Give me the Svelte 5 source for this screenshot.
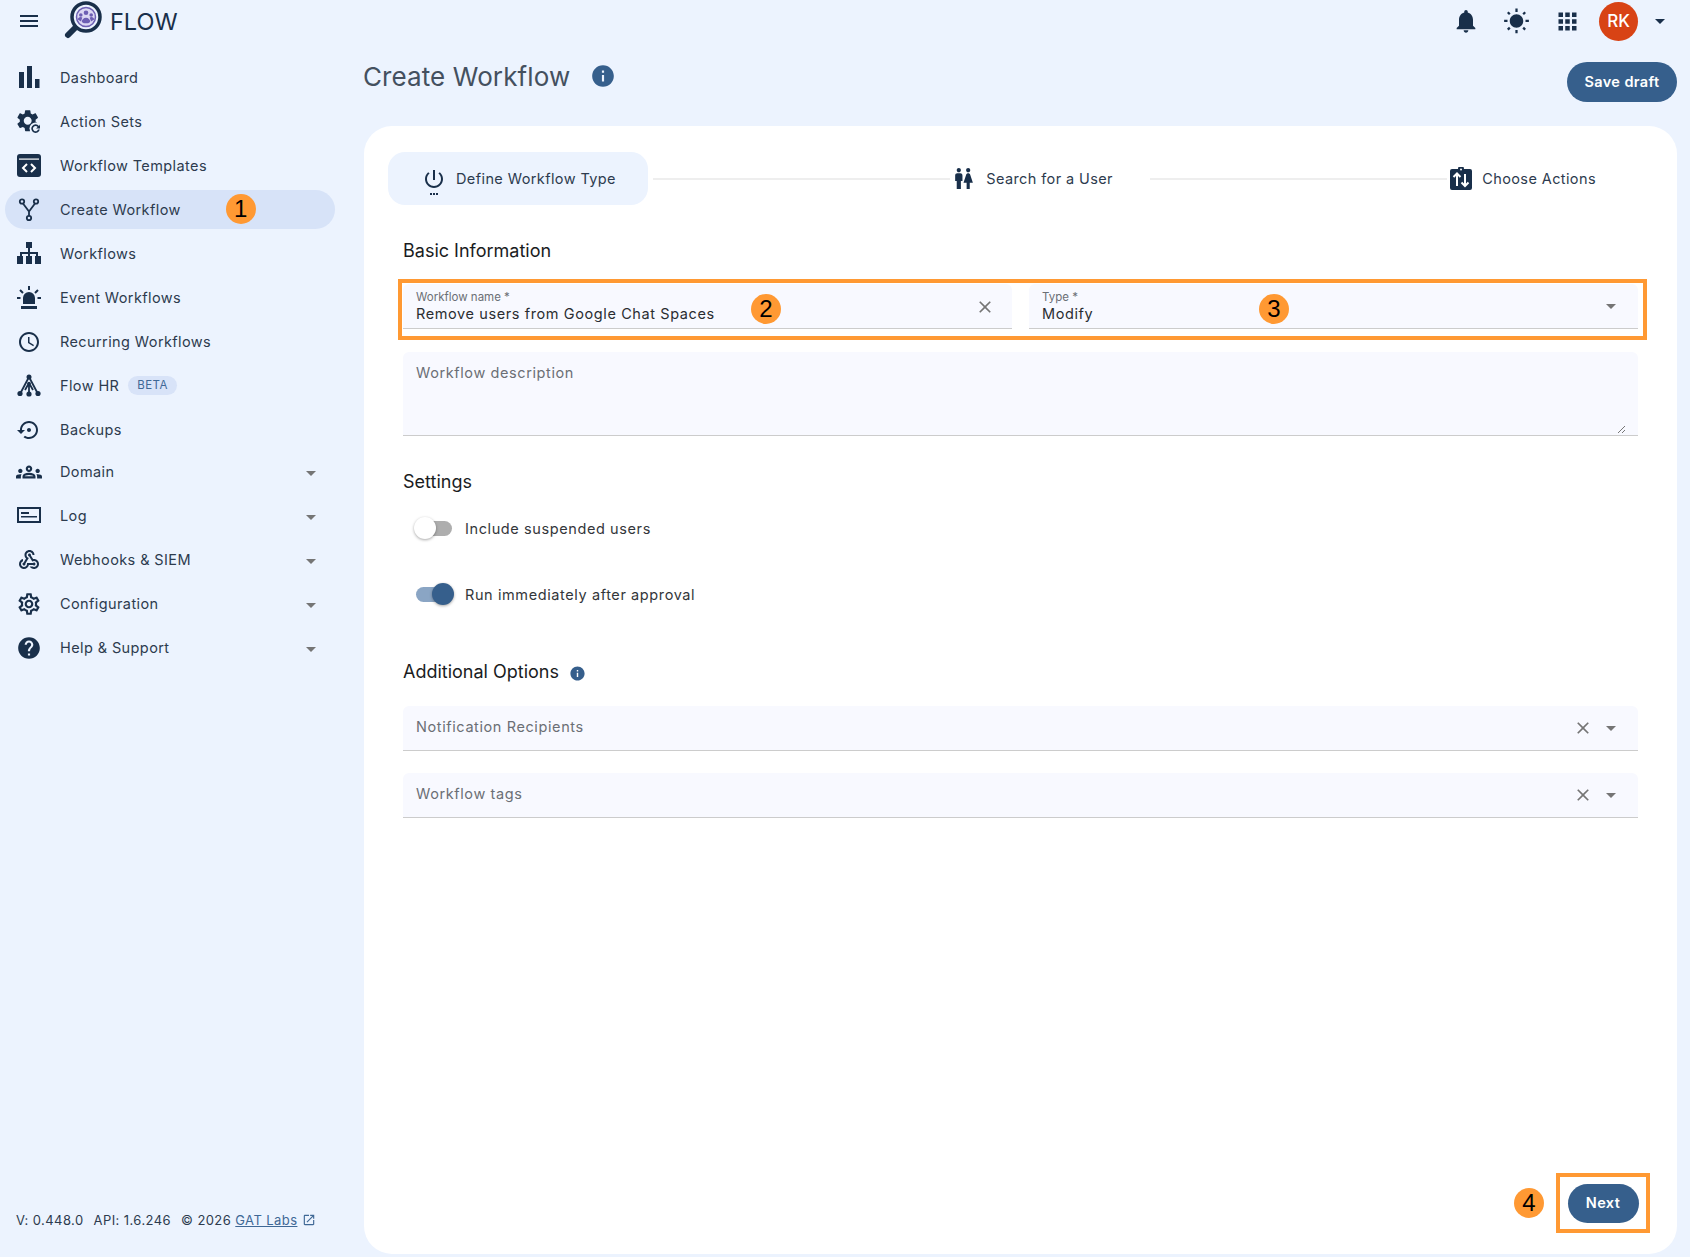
<script>
  const ICONS = {
    settings: "M19.43 12.98c.04-.32.07-.64.07-.98 0-.34-.03-.66-.07-.98l2.11-1.65c.19-.15.24-.42.12-.64l-2-3.46c-.09-.16-.26-.25-.44-.25-.06 0-.12.01-.17.03l-2.49 1c-.52-.4-1.08-.73-1.69-.98l-.38-2.65C14.46 2.18 14.25 2 14 2h-4c-.25 0-.46.18-.49.42l-.38 2.65c-.61.25-1.17.59-1.69.98l-2.49-1c-.06-.02-.12-.03-.18-.03-.17 0-.34.09-.43.25l-2 3.46c-.13.22-.07.49.12.64l2.11 1.65c-.04.32-.07.65-.07.98 0 .33.03.66.07.98l-2.11 1.65c-.19.15-.24.42-.12.64l2 3.46c.09.16.26.25.44.25.06 0 .12-.01.17-.03l2.49-1c.52.4 1.08.73 1.69.98l.38 2.65c.03.24.24.42.49.42h4c.25 0 .46-.18.49-.42l.38-2.65c.61-.25 1.17-.59 1.69-.98l2.49 1c.06.02.12.03.18.03.17 0 .34-.09.43-.25l2-3.46c.12-.22.07-.49-.12-.64l-2.11-1.65zm-1.98-1.71c.04.31.05.52.05.73 0 .21-.02.43-.05.73l-.14 1.13.89.7 1.08.84-.7 1.21-1.27-.51-1.04-.42-.9.68c-.43.32-.84.56-1.25.73l-1.06.43-.16 1.13-.2 1.35h-1.4l-.19-1.35-.16-1.13-1.06-.43c-.43-.18-.83-.41-1.23-.71l-.91-.7-1.06.43-1.27.51-.7-1.21 1.08-.84.89-.7-.14-1.13c-.03-.31-.05-.54-.05-.74s.02-.43.05-.73l.14-1.13-.89-.7-1.08-.84.7-1.21 1.27.51 1.04.42.9-.68c.43-.32.84-.56 1.25-.73l1.06-.43.16-1.13.2-1.35h1.39l.19 1.35.16 1.13 1.06.43c.43.18.83.41 1.23.71l.91.7 1.06-.43 1.27-.51.7 1.21-1.07.85-.89.7.14 1.13zM12 8c-2.21 0-4 1.79-4 4s1.79 4 4 4 4-1.79 4-4-1.79-4-4-4zm0 6c-1.1 0-2-.9-2-2s.9-2 2-2 2 .9 2 2-.9 2-2 2z",
    gearFill: "M19.14 12.94c.04-.3.06-.61.06-.94 0-.32-.02-.64-.07-.94l2.03-1.58c.18-.14.23-.41.12-.61l-1.92-3.32c-.12-.22-.37-.29-.59-.22l-2.39.96c-.5-.38-1.03-.7-1.62-.94l-.36-2.54c-.04-.24-.24-.41-.48-.41h-3.84c-.24 0-.43.17-.47.41l-.36 2.54c-.59.24-1.13.57-1.62.94l-2.39-.96c-.22-.08-.47 0-.59.22L2.74 8.87c-.12.21-.08.47.12.61l2.03 1.58c-.05.3-.09.63-.09.94s.02.64.07.94l-2.03 1.58c-.18.14-.23.41-.12.61l1.92 3.32c.12.22.37.29.59.22l2.39-.96c.5.38 1.03.7 1.62.94l.36 2.54c.05.24.24.41.48.41h3.84c.24 0 .44-.17.47-.41l.36-2.54c.59-.24 1.13-.56 1.62-.94l2.39.96c.22.08.47 0 .59-.22l1.92-3.32c.12-.22.07-.47-.12-.61l-2.01-1.58zM12 15.6c-1.98 0-3.6-1.62-3.6-3.6s1.62-3.6 3.6-3.6 3.6 1.62 3.6 3.6-1.62 3.6-3.6 3.6z",
    clock: "M11.99 2C6.47 2 2 6.48 2 12s4.47 10 9.99 10C17.52 22 22 17.52 22 12S17.52 2 11.99 2zM12 20c-4.42 0-8-3.58-8-8s3.58-8 8-8 8 3.58 8 8-3.58 8-8 8zm.5-13H11v6l5.25 3.15.75-1.23-4.5-2.67z",
    backup: "M14 12c0-1.1-.9-2-2-2s-2 .9-2 2 .9 2 2 2 2-.9 2-2zm-2-9c-4.97 0-9 4.03-9 9H0l4 4 4-4H5c0-3.87 3.13-7 7-7s7 3.13 7 7-3.13 7-7 7c-1.51 0-2.91-.49-4.06-1.3l-1.42 1.44C8.04 20.3 9.94 21 12 21c4.97 0 9-4.03 9-9s-4.03-9-9-9z",
    groups: "M4,13c1.1,0,2-0.9,2-2c0-1.1-0.9-2-2-2s-2,0.9-2,2C2,12.1,2.9,13,4,13z M5.13,14.1C4.76,14.04,4.39,14,4,14 c-0.99,0-1.93,0.21-2.78,0.58C0.48,14.9,0,15.62,0,16.43V18l4.5,0v-1.61C4.5,15.56,4.73,14.78,5.13,14.1z M20,13c1.1,0,2-0.9,2-2 c0-1.1-0.9-2-2-2s-2,0.9-2,2C18,12.1,18.9,13,20,13z M24,16.43c0-0.81-0.48-1.53-1.22-1.85C21.93,14.21,20.99,14,20,14 c-0.39,0-0.76,0.04-1.13,0.1c0.4,0.68,0.63,1.46,0.63,2.29V18l4.5,0V16.43z M16.24,13.65c-1.17-0.52-2.61-0.9-4.24-0.9 c-1.63,0-3.07,0.39-4.24,0.9C6.68,14.13,6,15.21,6,16.39V18h12v-1.61C18,15.21,17.32,14.13,16.24,13.65z M8.07,16 c0.09-0.23,0.13-0.39,0.91-0.69c0.97-0.38,1.99-0.56,3.02-0.56s2.05,0.18,3.02,0.56c0.77,0.3,0.81,0.46,0.91,0.69H8.07z M12,8 c0.55,0,1,0.45,1,1s-0.45,1-1,1s-1-0.45-1-1S11.45,8,12,8 M12,6c-1.66,0-3,1.34-3,3c0,1.66,1.34,3,3,3s3-1.34,3-3 C15,7.34,13.66,6,12,6L12,6z",
    webhook: "M10 15h5.88c.27-.31.67-.5 1.12-.5.83 0 1.5.67 1.5 1.5s-.67 1.5-1.5 1.5c-.44 0-.84-.19-1.12-.5H11.9c-.46 2.28-2.48 4-4.9 4-2.76 0-5-2.24-5-5 0-2.42 1.72-4.44 4-4.9v2.07c-1.16.41-2 1.53-2 2.83 0 1.65 1.35 3 3 3s3-1.35 3-3v-1zm2.5-11c1.65 0 3 1.35 3 3h2c0-2.76-2.24-5-5-5s-5 2.24-5 5c0 1.43.6 2.71 1.55 3.62l-2.35 3.9c-.68.14-1.2.75-1.2 1.48 0 .83.67 1.5 1.5 1.5s1.5-.67 1.5-1.5c0-.16-.02-.31-.07-.45l3.38-5.63C10.49 9.61 9.5 8.42 9.5 7c0-1.65 1.35-3 3-3zm4.5 9c-.64 0-1.23.2-1.72.54l-3.05-5.07C11.53 8.35 11 7.74 11 7c0-.83.67-1.5 1.5-1.5S14 6.17 14 7c0 .15-.02.29-.06.43l2.19 3.65c.28-.05.57-.08.87-.08 2.76 0 5 2.24 5 5s-2.24 5-5 5c-1.85 0-3.47-1.01-4.33-2.5h2.67c.48.32 1.05.5 1.66.5 1.65 0 3-1.35 3-3s-1.35-3-3-3z",
    help: "M12 2C6.48 2 2 6.48 2 12s4.48 10 10 10 10-4.48 10-10S17.52 2 12 2zm1 17h-2v-2h2v2zm2.07-7.75l-.9.92C13.45 12.9 13 13.5 13 15h-2v-.5c0-1.1.45-2.1 1.17-2.83l1.24-1.26c.37-.36.59-.86.59-1.41 0-1.1-.9-2-2-2s-2 .9-2 2H8c0-2.21 1.79-4 4-4s4 1.79 4 4c0 .88-.36 1.68-.93 2.25z",
    bell: "M12 22c1.1 0 2-.9 2-2h-4c0 1.1.89 2 2 2zm6-6v-5c0-3.07-1.64-5.64-4.5-6.32V4c0-.83-.67-1.5-1.5-1.5s-1.5.67-1.5 1.5v.68C7.63 5.36 6 7.92 6 11v5l-2 2v1h16v-1l-2-2z",
    sun: "M6.76 4.84l-1.8-1.79-1.41 1.41 1.79 1.79 1.42-1.41zM4 10.5H1v2h3v-2zm9-9.95h-2V3.5h2V.55zm7.45 3.91l-1.41-1.41-1.79 1.79 1.41 1.41 1.79-1.79zm-3.21 13.7l1.79 1.8 1.41-1.41-1.8-1.79-1.4 1.4zM20 10.5v2h3v-2h-3zm-8-5c-3.31 0-6 2.69-6 6s2.69 6 6 6 6-2.69 6-6-2.69-6-6-6zm-1 16.95h2V19.5h-2v2.95zm-7.45-3.91l1.41 1.41 1.79-1.8-1.41-1.41-1.79 1.8z",
    apps: "M4 8h4V4H4v4zm6 12h4v-4h-4v4zm-6 0h4v-4H4v4zm0-6h4v-4H4v4zm6 0h4v-4h-4v4zm6-10v4h4V4h-4zm-6 4h4V4h-4v4zm6 6h4v-4h-4v4zm0 6h4v-4h-4v4z",
    close: "M19 6.41L17.59 5 12 10.59 6.41 5 5 6.41 10.59 12 5 17.59 6.41 19 12 13.41 17.59 19 19 17.59 13.41 12z",
    caret: "M7 10l5 5 5-5z",
    info: "M12 2C6.48 2 2 6.48 2 12s4.48 10 10 10 10-4.48 10-10S17.52 2 12 2zm1 15h-2v-6h2v6zm0-8h-2V7h2v2z",
    power: "M13 3h-2v10h2V3zm4.83 2.17l-1.42 1.42C17.99 7.86 19 9.81 19 12c0 3.87-3.13 7-7 7s-7-3.13-7-7c0-2.19 1.01-4.14 2.58-5.42L6.17 5.17C4.23 6.82 3 9.26 3 12c0 4.97 4.03 9 9 9s9-4.03 9-9c0-2.74-1.23-5.18-3.17-6.83z",
    wc: "M5.5 22v-7.5H4V9c0-1.1.9-2 2-2h3c1.1 0 2 .9 2 2v5.5H9.5V22h-4zM18 22v-6h3l-2.54-7.63C18.18 7.55 17.42 7 16.56 7h-.12c-.86 0-1.63.55-1.9 1.37L12 16h3v6h3zM7.5 6c1.11 0 2-.89 2-2s-.89-2-2-2-2 .89-2 2 .89 2 2 2zm9 0c1.11 0 2-.89 2-2s-.89-2-2-2-2 .89-2 2 .89 2 2 2z",
    open: "M19 19H5V5h7V3H5c-1.11 0-2 .9-2 2v14c0 1.1.89 2 2 2h14c1.1 0 2-.9 2-2v-7h-2v7zM14 3v2h3.59l-9.83 9.83 1.41 1.41L19 6.41V10h2V3h-7z",
    menu: "M3 18h18v-2H3v2zm0-5h18v-2H3v2zm0-7v2h18V6H3z"
  };
  const nav = [
    { label: "Dashboard", icon: "bars" },
    { label: "Action Sets", icon: "actionsets" },
    { label: "Workflow Templates", icon: "templates" },
    { label: "Create Workflow", icon: "fork", active: true, badge: 1 },
    { label: "Workflows", icon: "sitemap" },
    { label: "Event Workflows", icon: "siren" },
    { label: "Recurring Workflows", icon: "clock" },
    { label: "Flow HR", icon: "hr", beta: true },
    { label: "Backups", icon: "backup" }
  ];
  const groups = [
    { label: "Domain", icon: "groups", size: 26 },
    { label: "Log", icon: "log" },
    { label: "Webhooks & SIEM", icon: "webhook" },
    { label: "Configuration", icon: "settings", size: 26 },
    { label: "Help & Support", icon: "help", size: 26 }
  ];
</script>

{#snippet glyph(name, size = 24)}
  <svg class="ic" width={size} height={size} viewBox="0 0 24 24" aria-hidden="true">
    {#if name === "bars"}
      <path d="M2 6h5v16H2zM10 0h5v22h-5zM18 13h4.500v9H18z" />
    {:else if name === "actionsets"}
      <path d={ICONS.gearFill} transform="translate(-2.500 -2.500) scale(1.100)" />
      <circle cx="18.500" cy="18.500" r="6" class="gap" />
      <path d="M22 16a4.300 4.300 0 1 0 .8 3.600h-1.800a2.600 2.600 0 1 1-.4-2.500l-1.500 1.500H23v-4z" />
    {:else if name === "templates"}
      <path d="M3 0h18a3 3 0 0 1 3 3v17a3 3 0 0 1-3 3H3a3 3 0 0 1-3-3V3a3 3 0 0 1 3-3z" />
      <path d="M2 4.500h20v1.200H2z" class="cut" />
      <path d="M10 10l-4 4 4 4M14 10l4 4-4 4" class="cutline" />
    {:else if name === "fork"}
      <g class="line">
        <circle cx="5" cy="3.500" r="2.200" /><circle cx="19" cy="3.500" r="2.200" /><circle cx="12" cy="20" r="2.200" />
        <path d="M6 5.500l6 8 6-8M12 13.500v4.300" />
      </g>
    {:else if name === "sitemap"}
      <path d="M9 0h6v6h-2v4h8v4h3v8H18v-8h1v-2h-6v2h2v8H9v-8h2v-2H5v2h1v8H0v-8h3v-4h8V6H9z" />
    {:else if name === "siren"}
      <path d="M6 18v-6a6 6 0 0 1 12 0v6zM4 20h16v3H4z" />
      <path d="M12 0v4M3 4l3 3M21 4l-3 3M0 12h3.500M20.500 12H24" class="rays" />
    {:else if name === "hr"}
      <g class="line">
        <path d="M12 3L3.500 19M12 3l8.500 16M12 9l-4 7M12 9l4 7M12 9v11" />
      </g>
      <circle cx="12" cy="3" r="2.500" /><circle cx="12" cy="9.500" r="1.800" /><circle cx="3" cy="19.500" r="2.600" /><circle cx="12" cy="20" r="2.600" /><circle cx="21" cy="19.500" r="2.600" />
    {:else if name === "log"}
      <path d="M0 3h24v16H0zM2 5v12h20V5z" fill-rule="evenodd" />
      <path d="M4 8h8v2H4zM4 12h16v1.500H4z" />
    {:else}
      <path d={ICONS[name]} />
    {/if}
  </svg>
{/snippet}

<div class="page">
  <header class="top">
    <button class="menu" aria-label="menu">{@render glyph("menu")}</button>
    <div class="logo">
      <svg width="42" height="42" viewBox="0 0 42 42" aria-hidden="true">
        <path d="M15 27L7 35" class="handle" />
        <circle cx="25" cy="17" r="14" class="lens" />
        <circle cx="25" cy="17" r="9.500" class="halo" />
        <circle cx="25" cy="12.800" r="2.300" class="purple" /><circle cx="19.800" cy="15" r="1.800" class="purple" /><circle cx="30.200" cy="15" r="1.800" class="purple" />
        <path d="M20.800 22a4.200 4.200 0 0 1 8.400 0l-2 1.200h-4.400zM16.800 19.500a3 3 0 0 1 4.500-2l-1.300 4zM33.200 19.500a3 3 0 0 0-4.500-2l1.300 4z" class="purple" />
      </svg>
      <span>FLOW</span>
    </div>
    <div class="tools">
      <span class="tool t1">{@render glyph("bell", 28)}</span>
      <span class="tool t2">{@render glyph("sun", 27)}</span>
      <span class="tool t3">{@render glyph("apps", 27)}</span>
      <span class="avatar">RK</span>
      <span class="tool t4">{@render glyph("caret", 24)}</span>
    </div>
  </header>

  <div class="body">
    <aside class="side">
      <nav class="list">
        {#each nav as n}
          <div class="row" class:active={n.active}>
            <span class="slot">{@render glyph(n.icon)}</span>
            <span class="txt">{n.label}</span>
            {#if n.beta}<span class="beta">BETA</span>{/if}
            {#if n.badge}<span class="mark navmark">{n.badge}</span>{/if}
          </div>
        {/each}
      </nav>
      <nav class="list sub">
        {#each groups as g}
          <div class="row">
            <span class="slot">{@render glyph(g.icon, g.size ?? 24)}</span>
            <span class="txt">{g.label}</span>
            <span class="cv">{@render glyph("caret")}</span>
          </div>
        {/each}
      </nav>
      <div class="foot">
        <span>V: 0.448.0</span><span>API: 1.6.246</span><span>© 2026 <a href="#top">GAT Labs</a></span>
        <span class="ext">{@render glyph("open", 14)}</span>
      </div>
    </aside>

    <main class="main">
      <div class="titlebar">
        <h1>Create Workflow</h1>
        <span class="tinfo">{@render glyph("info", 26)}</span>
        <button class="btn draft">Save draft</button>
      </div>

      <section class="card">
        <div class="stepper">
          <div class="step first">
            <span class="pw">{@render glyph("power", 24)}<i class="dots"></i></span>
            <span>Define Workflow Type</span>
          </div>
          <div class="conn"></div>
          <div class="step mid">{@render glyph("wc", 25)}<span>Search for a User</span></div>
          <div class="conn"></div>
          <div class="step last">
            <svg class="ic" width="24" height="24" viewBox="0 0 24 24" aria-hidden="true">
              <path d="M3 2h6a3 3 0 0 1 6 0h6a2 2 0 0 1 2 2v17a2 2 0 0 1-2 2H3a2 2 0 0 1-2-2V4a2 2 0 0 1 2-2z" />
              <circle cx="12" cy="2.600" r="1" class="cut" />
              <path d="M8 19V7M4.500 10L8 6.500l3.500 3.500M16 7v12M12.500 15.500L16 19l3.500-3.500" class="cutline" />
            </svg>
            <span>Choose Actions</span>
          </div>
        </div>

        <div class="form">
          <h2>Basic Information</h2>
          <div class="hilite">
            <div class="field name">
              <label for="wf">Workflow name *</label>
              <input id="wf" value="Remove users from Google Chat Spaces" />
              <span class="fx">{@render glyph("close", 20)}</span>
              <span class="mark m2">2</span>
            </div>
            <div class="field type">
              <label for="ty">Type *</label>
              <input id="ty" value="Modify" />
              <span class="fc">{@render glyph("caret", 24)}</span>
              <span class="mark m3">3</span>
            </div>
          </div>

          <div class="desc">
            <span class="ph">Workflow description</span>
            <svg class="grip" width="10" height="10" viewBox="0 0 10 10" aria-hidden="true"><path d="M9 2L2 9M9 6L6 9" /></svg>
          </div>

          <h2 class="settings">Settings</h2>
          <div class="switch">
            <span class="track"><i class="thumb"></i></span>
            <span>Include suspended users</span>
          </div>
          <div class="switch on">
            <span class="track"><i class="thumb"></i></span>
            <span>Run immediately after approval</span>
          </div>

          <h2 class="addl">Additional Options <span class="ainfo">{@render glyph("info", 17)}</span></h2>
          <div class="combo">
            <span class="ph">Notification Recipients</span>
            <span class="cx">{@render glyph("close", 20)}</span>
            <span class="cc">{@render glyph("caret", 24)}</span>
          </div>
          <div class="combo second">
            <span class="ph">Workflow tags</span>
            <span class="cx">{@render glyph("close", 20)}</span>
            <span class="cc">{@render glyph("caret", 24)}</span>
          </div>
        </div>

        <div class="actions">
          <span class="mark">4</span>
          <div class="nextbox"><button class="btn next">Next</button></div>
        </div>
      </section>
    </main>
  </div>
</div>

<style>
  :global(body) {
    margin: 0;
    background: #ecf3fe;
  }
  .page {
    height: 1257px;
    overflow: hidden;
    display: flex;
    flex-direction: column;
    font-family: Inter, "Liberation Sans", sans-serif;
    color: #2d3b4e;
    background: #ecf3fe;
    font-size: 14.500px;
    letter-spacing: 0.4px;
  }
  .ic { display: block; fill: currentColor; flex: none; }
  .ic .gap { fill: #ecf3fe; }
  .ic .cut { fill: #fff; }
  .ic .cutline { fill: none; stroke: #fff; stroke-width: 2; }
  .ic .rays { fill: none; stroke: currentColor; stroke-width: 2; }
  .ic .line { fill: none; stroke: currentColor; stroke-width: 1.800; }

  .top {
    height: 42px;
    flex: none;
    display: flex;
    align-items: center;
    color: #192f4a;
  }
  .menu {
    background: none;
    border: 0;
    padding: 0;
    margin-left: 17px;
    color: inherit;
  }
  .logo {
    display: flex;
    align-items: center;
    margin-left: 20px;
    gap: 7px;
    font-size: 23.500px;
    letter-spacing: 0;
    font-weight: 400;
  }
  .logo .handle { stroke: #192f4a; stroke-width: 6; stroke-linecap: round; fill: none; }
  .logo .lens { fill: #ecf3fe; stroke: #192f4a; stroke-width: 3.500; }
  .logo .halo { fill: #dcd8f3; stroke: #6d5fb3; stroke-width: 1.500; }
  .logo .purple { fill: #6d5fb3; }
  .tools {
    margin-left: auto;
    margin-right: 18px;
    display: flex;
    align-items: center;
  }
  .t1 { margin-right: 23px; }
  .t2 { margin-right: 24px; }
  .t3 { margin-right: 18px; }
  .t4 { margin-left: 10px; }
  .avatar {
    width: 39px;
    height: 39px;
    border-radius: 50%;
    background: #d84315;
    color: #fff;
    font-size: 17px;
    font-weight: 500;
    letter-spacing: 0;
    display: flex;
    align-items: center;
    justify-content: center;
  }

  .body { flex: 1; display: flex; min-height: 0; }
  .side {
    width: 364px;
    flex: none;
    box-sizing: border-box;
    padding: 15.500px 29px 0 5px;
    display: flex;
    flex-direction: column;
  }
  .list { display: flex; flex-direction: column; gap: 5px; }
  .sub { margin-top: 3px; }
  .row {
    height: 39px;
    border-radius: 20px;
    display: flex;
    align-items: center;
    padding: 0 12px;
  }
  .row.active { background: #d7e3f8; }
  .slot {
    width: 24px;
    height: 24px;
    margin: 1px 19px 0 0;
    color: #192f4a;
    display: flex;
    align-items: center;
    justify-content: center;
    flex: none;
  }
  .cv { margin: 3px 0 0 auto; color: #757575; }
  .beta {
    margin-left: 9px;
    padding: 0 9px;
    height: 19px;
    line-height: 19px;
    border-radius: 10px;
    background: #d8e3f8;
    color: #3f6896;
    font-size: 11.500px;
    letter-spacing: 0.4px;
  }
  .mark {
    width: 30px;
    height: 30px;
    border-radius: 50%;
    background: #ff9933;
    color: #000;
    font-family: "Liberation Sans", Arial, sans-serif;
    font-size: 24px;
    letter-spacing: 0;
    line-height: 30px;
    text-align: center;
    flex: none;
  }
  .navmark { margin-left: 45px; }
  .foot {
    margin-top: auto;
    margin-bottom: 29px;
    margin-left: 11px;
    display: flex;
    align-items: center;
    font-size: 13px;
    letter-spacing: 0.42px;
    gap: 10px;
    line-height: 16px;
  }
  .foot a { color: #3f6896; text-decoration: underline; }
  .ext { color: #3f6896; margin-left: -5px; }

  .main { flex: 1; min-width: 0; padding-right: 13px; display: flex; flex-direction: column; }
  .titlebar {
    height: 84px;
    display: flex;
    align-items: flex-start;
    flex: none;
  }
  h1 {
    margin: 16px 0 0 -1px;
    font-size: 26px;
    font-weight: 400;
    line-height: 38px;
    letter-spacing: 0.1px;
    color: #44505f;
  }
  .tinfo { margin: 21px 0 0 20px; color: #365f8c; }
  .btn {
    border: 0;
    background: #365f8c;
    color: #fff;
    font-family: inherit;
    font-size: 14.500px;
    font-weight: 600;
    letter-spacing: 0.4px;
    border-radius: 20px;
  }
  .draft { margin: 20px 0 0 auto; width: 110px; height: 40px; padding: 0 0 2px; }

  .card {
    height: 1128px;
    background: #fff;
    border-radius: 28px;
    padding: 26px 0 0 24px;
    box-sizing: border-box;
    display: flex;
    flex-direction: column;
  }
  .stepper {
    display: flex;
    align-items: center;
    padding-right: 81px;
    height: 53px;
  }
  .step { display: flex; align-items: center; flex: none; color: #2d3b4e; }
  .step .ic { color: #192f4a; }
  .first {
    width: 260px;
    height: 53px;
    box-sizing: border-box;
    border-radius: 17px;
    background: #ecf3fe;
    margin-right: 5px;
    padding-left: 34px;
    gap: 10px;
  }
  .pw { position: relative; display: block; color: #192f4a; }
  .dots {
    position: absolute;
    left: 8px;
    bottom: -4px;
    width: 2px;
    height: 2px;
    background: #192f4a;
    box-shadow: 3px 0 #192f4a, 6px 0 #192f4a;
  }
  .conn { flex: 1; height: 2px; background: #eeeeee; }
  .mid { margin: 0 37px 0 1px; gap: 10px; }
  .last { margin-left: 1px; gap: 9px; padding-left: 1px; }

  .form { padding: 0 39px 0 15px; letter-spacing: 0.6px; }
  h2 {
    margin: 34px 0 0;
    font-size: 18px;
    line-height: 24px;
    font-weight: 400;
    letter-spacing: 0;
    color: #1a1c1e;
  }
  .hilite {
    margin: 16px -9px 0 -5px;
    border: 4px solid #ff9933;
    padding: 1px 5px 2px 1px;
    display: flex;
    gap: 17px;
    height: 50px;
    box-sizing: content-box;
  }
  .field {
    flex: 1;
    position: relative;
    height: 45px;
    box-sizing: border-box;
    background: #f8f9ff;
    border-bottom: 1.500px solid #cccccc;
    border-radius: 6px 6px 0 0;
  }
  .field label {
    position: absolute;
    left: 13px;
    top: 6px;
    font-size: 11.500px;
    line-height: 14px;
    color: #6b6f75;
    letter-spacing: 0;
  }
  .field input {
    position: absolute;
    left: 13px;
    top: 19px;
    width: 420px;
    padding: 0;
    border: 0;
    outline: 0;
    background: none;
    height: 20px;
    font: inherit;
    letter-spacing: 0.6px;
    color: #2a2d31;
  }
  .fx { position: absolute; right: 17px; top: 13px; color: #757575; }
  .fc { position: absolute; right: 15px; top: 10px; color: #757575; }
  .m2 { position: absolute; left: 348px; top: 10px; }
  .m3 { position: absolute; left: 230px; top: 10px; }

  .desc {
    position: relative;
    margin-top: 12px;
    height: 84px;
    box-sizing: border-box;
    background: #f8f9ff;
    border-bottom: 1.500px solid #cccccc;
    border-radius: 6px 6px 0 0;
    padding: 12px 13px;
  }
  .ph { color: #6b6f75; line-height: 18px; }
  .grip { position: absolute; right: 12px; bottom: 1px; }
  .grip path { stroke: #777; stroke-width: 1; fill: none; }

  .settings { margin-top: 34px; }
  .switch {
    display: flex;
    align-items: center;
    height: 22px;
    margin-left: 13px;
    gap: 13px;
    color: #33363a;
  }
  .settings + .switch { margin-top: 23px; }
  .switch.on { margin-top: 44px; }
  .track {
    position: relative;
    width: 36px;
    height: 15px;
    border-radius: 8px;
    background: #aeaeae;
    flex: none;
  }
  .thumb {
    position: absolute;
    left: -2px;
    top: -3.500px;
    width: 22px;
    height: 22px;
    border-radius: 50%;
    background: #fff;
    box-shadow: 0 1px 3px rgba(0, 0, 0, 0.35);
  }
  .on .track { background: #8aa5c4; }
  .on .thumb { left: 16px; background: #365f8c; }

  .addl {
    margin-top: 55px;
    display: flex;
    align-items: center;
  }
  .ainfo { color: #365f8c; margin-left: 10px; margin-top: 2px; }
  .combo {
    position: relative;
    margin-top: 22px;
    height: 45px;
    box-sizing: border-box;
    background: #f8f9ff;
    border-bottom: 1.500px solid #cccccc;
    border-radius: 6px 6px 0 0;
    display: flex;
    align-items: center;
    padding: 0 0 2px 13px;
  }
  .combo.second { margin-top: 22px; }
  .cx { position: absolute; right: 45px; top: 12px; color: #757575; }
  .cc { position: absolute; right: 15px; top: 10px; color: #757575; }

  .actions {
    margin-top: auto;
    margin-bottom: 21px;
    margin-right: 27px;
    display: flex;
    align-items: center;
    justify-content: flex-end;
    gap: 12px;
  }
  .nextbox {
    width: 94px;
    height: 60px;
    box-sizing: border-box;
    border: 4px solid #ff9933;
    display: flex;
    align-items: center;
    justify-content: center;
  }
  .next { width: 71px; height: 39px; padding: 0 0 2px; }
</style>
